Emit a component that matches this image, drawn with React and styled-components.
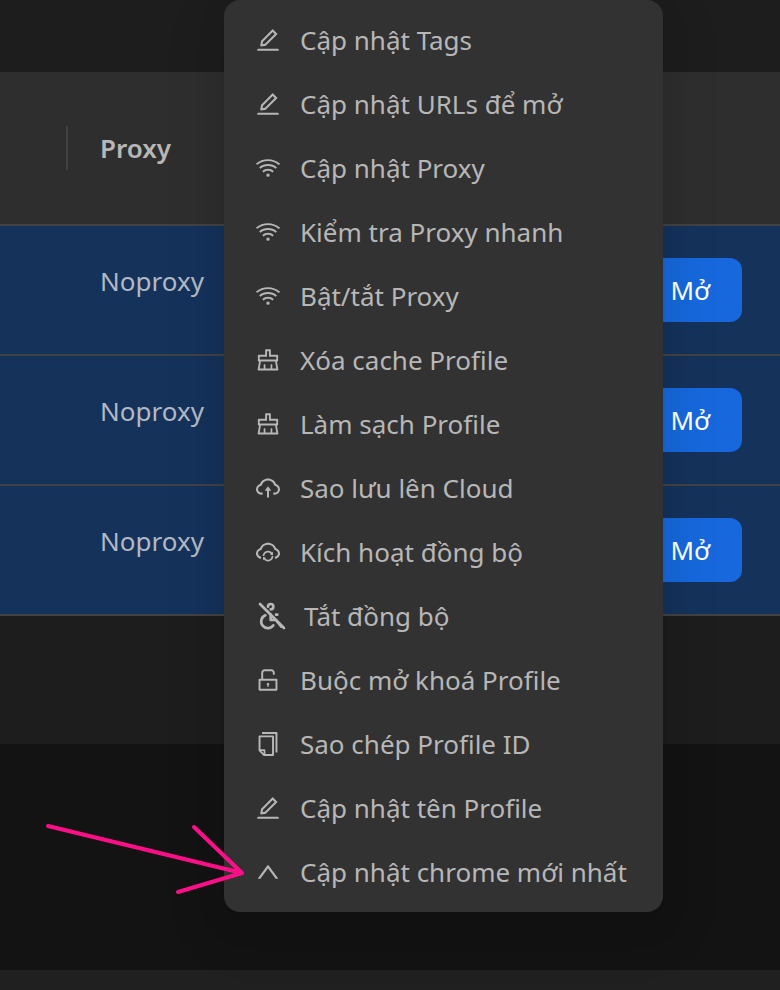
import React from "react";
import styled, { createGlobalStyle } from "styled-components";
import {
  AiOutlineEdit,
  AiOutlineWifi,
  AiOutlineClear,
  AiOutlineCloudUpload,
  AiOutlineCloudSync,
  AiOutlineUnlock,
  AiOutlineCopy,
  AiOutlineUp,
} from "react-icons/ai";
import { TbDisabledOff } from "react-icons/tb";

const GlobalStyle = createGlobalStyle`
  *, *::before, *::after { box-sizing: border-box; }
  body {
    margin: 0;
    background: #131313;
    color: #b7b7b7;
    font-family: "Noto Sans", "Open Sans", sans-serif;
    font-size: 26px;
    line-height: 46px;
  }
`;

const Page = styled.div`
  position: relative;
  display: flex;
  flex-direction: column;
  min-height: 100vh;
  overflow: hidden;
`;

const Panel = styled.main`
  padding: 72px 0 128px;
  background: #1d1d1d;
`;

const Table = styled.table`
  width: 100%;
  border-collapse: separate;
  border-spacing: 0;
  table-layout: fixed;
`;

const HeadCell = styled.th`
  position: relative;
  width: ${(p) => p.$width || "auto"};
  height: 154px;
  padding: 0 32px;
  background: #2e2e2e;
  border-bottom: 2px solid #424242;
  text-align: left;
  font-weight: 600;

  ${(p) =>
    p.$divided &&
    `&::after {
      content: "";
      position: absolute;
      top: 54px;
      right: 0;
      width: 2px;
      height: 44px;
      background: #424242;
    }`}
`;

const Cell = styled.td`
  height: 130px;
  padding: 32px;
  padding-right: ${(p) => (p.$end ? "38px" : "32px")};
  background: #15325b;
  border-bottom: 2px solid #424242;
  color: #b1b9c4;
  text-align: ${(p) => (p.$end ? "right" : "left")};
  vertical-align: top;
`;

const OpenButton = styled.button`
  height: 64px;
  padding: 0 32px;
  border: 0;
  border-radius: 12px;
  background: #1668dc;
  color: #fff;
  font: inherit;
  vertical-align: top;
  cursor: pointer;
`;

const Footer = styled.footer`
  height: 20px;
  margin-top: auto;
  background: #202020;
`;

const Menu = styled.ul`
  position: absolute;
  top: 0;
  left: 224px;
  min-width: 439px;
  margin: 0;
  padding: 8px;
  list-style: none;
  border-radius: 16px;
  background: #323232;
  box-shadow:
    0 12px 32px rgba(0, 0, 0, 0.08),
    0 6px 12px -8px rgba(0, 0, 0, 0.12),
    0 18px 56px 16px rgba(0, 0, 0, 0.05);
`;

const MenuButton = styled.button`
  display: flex;
  align-items: center;
  gap: ${(p) => (p.$wide ? "16px" : "20px")};
  width: 100%;
  height: 64px;
  padding: 0 24px;
  border: 0;
  border-radius: 8px;
  background: transparent;
  color: inherit;
  font: inherit;
  white-space: nowrap;
  cursor: pointer;

  svg {
    flex: none;
    width: ${(p) => (p.$wide ? "32px" : "24px")};
    height: ${(p) => (p.$wide ? "32px" : "24px")};
  }
`;

const Arrow = styled.svg`
  position: absolute;
  top: 820px;
  left: 40px;
  pointer-events: none;
`;

const items = [
  { icon: AiOutlineEdit, label: "Cập nhật Tags" },
  { icon: AiOutlineEdit, label: "Cập nhật URLs để mở" },
  { icon: AiOutlineWifi, label: "Cập nhật Proxy" },
  { icon: AiOutlineWifi, label: "Kiểm tra Proxy nhanh" },
  { icon: AiOutlineWifi, label: "Bật/tắt Proxy" },
  { icon: AiOutlineClear, label: "Xóa cache Profile" },
  { icon: AiOutlineClear, label: "Làm sạch Profile" },
  { icon: AiOutlineCloudUpload, label: "Sao lưu lên Cloud" },
  { icon: AiOutlineCloudSync, label: "Kích hoạt đồng bộ" },
  { icon: TbDisabledOff, label: "Tắt đồng bộ", wide: true },
  { icon: AiOutlineUnlock, label: "Buộc mở khoá Profile" },
  { icon: AiOutlineCopy, label: "Sao chép Profile ID" },
  { icon: AiOutlineEdit, label: "Cập nhật tên Profile" },
  { icon: AiOutlineUp, label: "Cập nhật chrome mới nhất" },
];

const rows = [1, 2, 3];

export default function App() {
  return (
    <Page>
      <GlobalStyle />
      <Panel>
        <Table>
          <thead>
            <tr>
              <HeadCell $width="68px" $divided />
              <HeadCell>Proxy</HeadCell>
              <HeadCell />
            </tr>
          </thead>
          <tbody>
            {rows.map((id) => (
              <tr key={id}>
                <Cell />
                <Cell>Noproxy</Cell>
                <Cell $end>
                  <OpenButton type="button">Mở</OpenButton>
                </Cell>
              </tr>
            ))}
          </tbody>
        </Table>
      </Panel>
      <Footer />
      <Menu>
        {items.map(({ icon: Icon, label, wide }) => (
          <li key={label}>
            <MenuButton type="button" $wide={wide}>
              <Icon viewBox={wide ? "0 0 24 24" : "64 64 896 896"} aria-hidden="true" />
              {label}
            </MenuButton>
          </li>
        ))}
      </Menu>
      <Arrow width="208" height="80" viewBox="0 0 208 80" aria-hidden="true">
        <path
          d="M8 6 202 53M154 7l48 46-64 19"
          fill="none"
          stroke="#ff0f87"
          strokeWidth="4"
          strokeLinecap="round"
          strokeLinejoin="round"
        />
      </Arrow>
    </Page>
  );
}
